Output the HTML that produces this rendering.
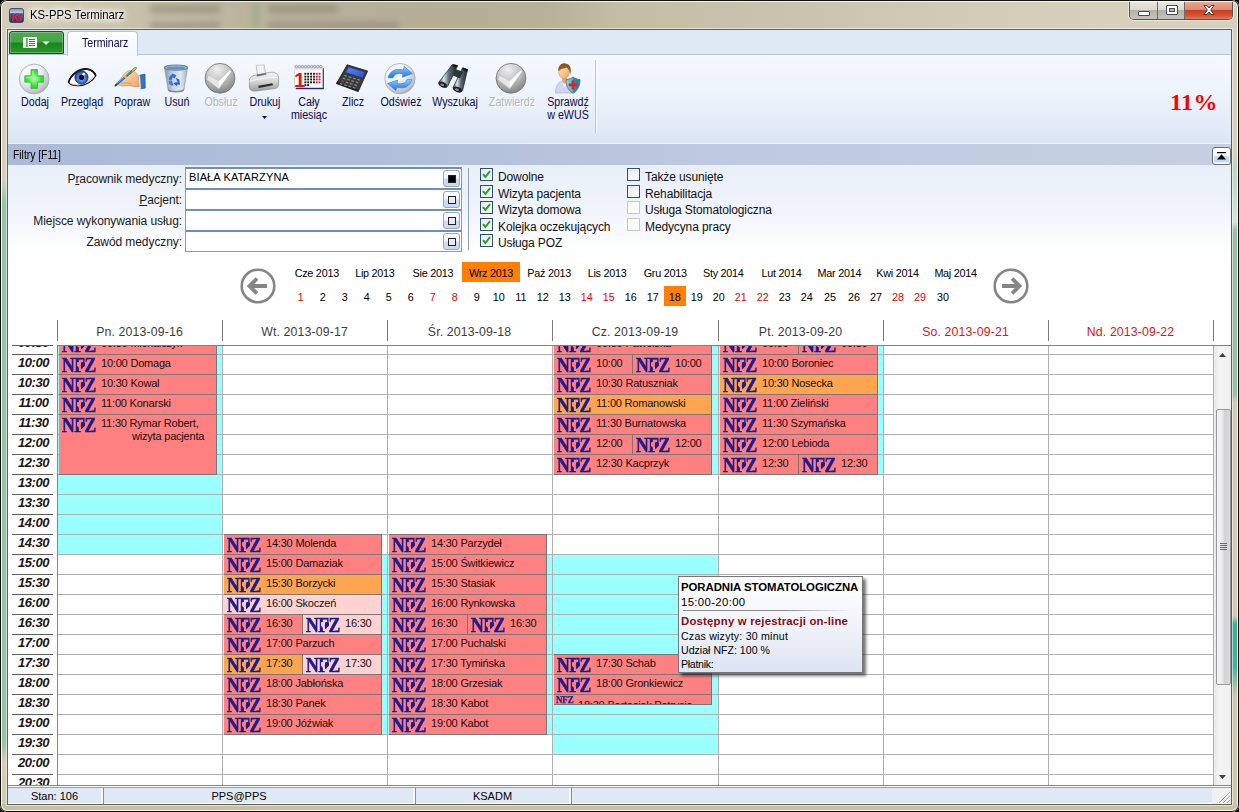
<!DOCTYPE html><html lang="pl"><head><meta charset="utf-8"><title>KS-PPS Terminarz</title><style>
*{box-sizing:border-box;margin:0;padding:0}
html,body{width:1239px;height:812px;overflow:hidden;background:#000}
body{font-family:"Liberation Sans",sans-serif;font-size:11px;color:#000;position:relative}
.a{position:absolute}
#frame{left:0;top:0;width:1239px;height:812px;border-radius:7px 7px 7px 7px;overflow:hidden;
 background:#d2cbb3}
#client{left:8px;top:30px;width:1223px;height:774px;background:#fff;overflow:hidden}
.t{position:absolute;white-space:nowrap;line-height:1}
.c{text-align:center}
.r{text-align:right}
.rl{position:absolute;color:#0a0a55;font-size:12px;line-height:13px;text-align:center;white-space:nowrap;transform:translateX(-50%) scaleX(.89)}
.rl.d{color:#b4b7be;text-shadow:1px 1px 0 #fff}
.fl{position:absolute;font-size:12px;letter-spacing:-.08px;line-height:14px;color:#1a1a1a;white-space:nowrap;text-align:right;right:1049px}
.inp{position:absolute;left:177px;width:277px;height:22px;border:1px solid #7f9dc3;border-top:2px solid #6f8fba;background:#fff}
.ib{position:absolute;left:435px;width:17px;height:17px;border:1px solid #9aa7ba;border-radius:3px;background:linear-gradient(#fbfcfe 0,#f1f5fb 45%,#cfdef5 55%,#c6d8f3 100%)}
.ib i{position:absolute;left:4px;top:4px;width:8px;height:8px;border:1px solid #222;background:#e8ecf4}
.ib.f i{background:#000}
.cb{position:absolute;width:13px;height:13px;border:1px solid #2f4f75;background:linear-gradient(135deg,#e6e9ee,#fff)}
.cb.d{border-color:#c9c9c4;background:#fbfbfa}
.cl{position:absolute;font-size:12px;letter-spacing:-.12px;line-height:14px;color:#111;white-space:nowrap}
.mo{position:absolute;top:232px;height:20px;width:58px;font-size:10.8px;letter-spacing:-.25px;line-height:22px;text-align:center;color:#000;white-space:nowrap}
.dy{position:absolute;top:256px;height:20px;width:22px;font-size:10.8px;line-height:22px;text-align:center;color:#000}
.red{color:#f00000}
.sel{background:#ff8000}
.hd{position:absolute;top:294px;height:16px;font-size:12.3px;letter-spacing:.14px;line-height:16px;text-align:center;color:#3c3c3c;white-space:nowrap}
.hd.we{color:#e81010}
.tick{position:absolute;top:290px;width:1px;height:21px;background:#7a7a7a}
.tm{position:absolute;left:4px;width:41px;padding-left:2px;height:20px;font:italic bold 13px/15px "Liberation Sans",sans-serif;letter-spacing:-.45px;color:#1c1410;text-align:center;border-top:1px solid #606060}
.hl{position:absolute;left:49px;width:1157px;height:1px;background:#b0b0b0}
.vl{position:absolute;top:315px;width:1px;height:440px;background:#b0b0b0}
.cy{position:absolute;background:#99ffff}
.ev{position:absolute;--bg:#ff8080;background:var(--bg);border:1px solid #7a7676;border-width:1px 1px 1px 0;overflow:hidden;white-space:nowrap;font-size:11px;letter-spacing:-.2px;line-height:13px;color:#111}
.ev.o{--bg:#ffa550}
.ev.p{--bg:#ffd2d2}
.nfz{position:absolute;left:2.5px;top:0;font:bold 20.6px/21px "Liberation Serif",serif;color:#1c1c8c;-webkit-text-stroke:.55px #1c1c8c;letter-spacing:-.6px;transform:scaleX(.86);transform-origin:0 0}
.et{position:absolute;left:42px;top:2px}
.h1,.h2{position:absolute;top:6.6px;width:4.2px;height:8px}
.h1{left:17.6px;background:var(--bg);clip-path:polygon(100% 18%,78% 4%,45% 0,14% 10%,0 32%,14% 56%,100% 100%)}
.h2{left:21.8px;width:4.6px;background:#1c1c8c;clip-path:polygon(0 18%,22% 4%,55% 0,86% 10%,100% 32%,86% 56%,0 100%)}
</style></head><body>
<div id="frame" class="a">
<div class="a" style="left:0;top:0;width:1239px;height:30px;background:linear-gradient(90deg,#d3cdb8 0,#cbc5ae 8%,#bbb49d 20%,#b5ae97 34%,#b8b19a 44%,#c3bda5 50%,#c9c3ad 62%,#d0cab5 75%,#d6d0bc 88%,#d5cfbb 100%)"></div>
<div class="a" style="left:150px;top:5px;width:70px;height:8px;background:#857e6a;filter:blur(3px);opacity:.55"></div>
<div class="a" style="left:150px;top:22px;width:70px;height:7px;background:#857e6a;filter:blur(3px);opacity:.55"></div>
<div class="a" style="left:268px;top:5px;width:70px;height:8px;background:#827c68;filter:blur(3px);opacity:.55"></div>
<div class="a" style="left:268px;top:22px;width:130px;height:7px;background:#827c68;filter:blur(3px);opacity:.55"></div>
<div class="a" style="left:252px;top:3px;width:8px;height:26px;background:#8fa57c;filter:blur(3px);opacity:.55"></div>
<div class="a" style="left:0;top:30px;width:8px;height:775px;background:linear-gradient(180deg,#d8d0bb 0,#d8d0bb 150px,#98c2a8 172px,#98c2a8 712px,#d4ccb4 732px,#d0c8ae 775px)"></div>
<div class="a" style="left:1231px;top:30px;width:8px;height:775px;background:linear-gradient(180deg,#d8d0bb 0,#d8d0bb 126px,#bcd6c2 136px,#d3e4d6 192px,#9bbfa6 200px,#9bbfa6 364px,#d2cab4 372px,#d2cab4 586px,#3fb098 594px,#45b29a 636px,#cdc5ad 664px,#d0c8ae 775px)"></div>
<div class="a" style="left:0;top:804px;width:1239px;height:8px;background:#c8c0a2"></div>
<div class="a" style="left:0;top:0;width:1239px;height:812px;border:1px solid #0e0e0a;border-radius:7px;box-shadow:inset 0 0 0 1px rgba(255,255,252,.85);z-index:5;pointer-events:none"></div>
<div class="a" style="left:7px;top:29px;width:1225px;height:776px;border:1px solid #625f53;box-shadow:0 0 0 1px rgba(255,255,255,.55)"></div>
<svg class="a" style="left:8.5px;top:7.5px" width="15" height="15" viewBox="0 0 16 16"><defs><linearGradient id="ki" x1="0" y1="0" x2="0" y2="1"><stop offset="0" stop-color="#7b93b8"/><stop offset=".35" stop-color="#c7d0df"/><stop offset=".36" stop-color="#3a5f96"/><stop offset="1" stop-color="#1d3f73"/></linearGradient></defs><rect x=".5" y=".5" width="15" height="15" rx="2.5" fill="url(#ki)" stroke="#2b4a7a"/><text x="2" y="13.5" font-family="Liberation Sans,sans-serif" font-weight="bold" font-style="italic" font-size="11" fill="#e01822">K</text><text x="8.3" y="14" font-family="Liberation Sans,sans-serif" font-weight="bold" font-style="italic" font-size="9" fill="#e01822">s</text></svg>
<div class="t" style="left:29.5px;top:9px;font-size:12.6px;transform:scaleX(.9);transform-origin:0 0;color:#000;text-shadow:0 0 6px #fff,0 0 6px #fff,0 0 9px #fff,0 0 12px #fff">KS-PPS Terminarz</div>
<div class="a" style="left:1129px;top:1px;width:104px;height:19px;border:1px solid #54524b;border-top:0;border-radius:0 0 5px 5px;overflow:hidden;box-shadow:0 0 0 1px rgba(255,255,255,.5)"><div class="a" style="left:0;top:0;width:28px;height:19px;background:linear-gradient(180deg,#e9e7e0 0,#dbd8cf 45%,#b3b0a5 50%,#c9c6bb 100%);border-right:1px solid #6d6a62"></div><div class="a" style="left:28px;top:0;width:27px;height:19px;background:linear-gradient(180deg,#e9e7e0 0,#dbd8cf 45%,#b3b0a5 50%,#c9c6bb 100%);border-right:1px solid #6d6a62"></div><div class="a" style="left:55px;top:0;width:48px;height:19px;background:linear-gradient(180deg,#eba999 0,#dc8a76 45%,#c93d22 50%,#d5593b 80%,#e08a6c 100%)"></div><div class="a" style="left:8px;top:10px;width:12px;height:5px;background:#fff;border:1px solid #45486a;border-radius:1px"></div><div class="a" style="left:36px;top:4px;width:12px;height:10px;background:#fff;border:1px solid #45486a;border-radius:1px"></div><div class="a" style="left:39px;top:7px;width:6px;height:4px;background:#b9b7ad;border:1px solid #45486a"></div><svg class="a" style="left:72px;top:3px" width="14" height="12" viewBox="0 0 14 12"><path d="M2 1.5 L5 1.5 L7 4 L9 1.5 L12 1.5 L8.7 6 L12 10.5 L9 10.5 L7 8 L5 10.5 L2 10.5 L5.3 6 Z" fill="#fff" stroke="#5a3030" stroke-width="1"/></svg></div>
<div id="client" class="a">
<div class="a" style="left:0;top:0;width:1224px;height:25px;background:#dfe9f5;border-bottom:1px solid #b4c6dd"></div>
<div class="a" style="left:1px;top:1px;width:55px;height:23px;border:1px solid #23500f;border-radius:3px 3px 0 0;background:linear-gradient(180deg,#50a850 0,#47a247 48%,#148814 52%,#2f962f 100%);box-shadow:inset 0 0 0 1px rgba(255,255,255,.25)"></div>
<svg class="a" style="left:15px;top:7px" width="30" height="12" viewBox="0 0 30 12"><rect x="0" y="0" width="14" height="11" rx="1" fill="#f4f7f4"/><rect x="3.3" y="1" width="1.2" height="9" fill="#2a8a2a"/><rect x="6" y="2" width="6" height="1" fill="#2a8a2a"/><rect x="6" y="4" width="6" height="1" fill="#2a8a2a"/><rect x="6" y="6" width="6" height="1" fill="#2a8a2a"/><rect x="6" y="8" width="6" height="1" fill="#2a8a2a"/><path d="M19.5 4.5 h7 l-3.5 3.5z" fill="#f4f7f4"/></svg>
<div class="a" style="left:59px;top:1px;width:71px;height:25px;border:1px solid #b4c6dd;border-bottom:0;border-radius:4px 4px 0 0;background:linear-gradient(180deg,#fbfdff,#f3f8fd)"></div>
<div class="t" style="left:74px;top:7px;font-size:12px;transform:scaleX(.88);transform-origin:0 0;color:#0a0a55">Terminarz</div>
<div class="a" style="left:0;top:25px;width:1224px;height:89px;background:linear-gradient(180deg,#f4f9fe 0,#eef4fb 40%,#e4ecf7 75%,#dbe5f3 100%)"></div>
<div class="a" style="left:59px;top:24px;width:71px;height:2px;background:#f3f8fd;border-left:1px solid #b4c6dd;border-right:1px solid #b4c6dd"></div>
<div class="a" style="left:587px;top:30px;width:1px;height:73px;background:#b9c7dc"></div>
<div class="a" style="left:588px;top:30px;width:1px;height:73px;background:#f8fbfe"></div>
<div class="t" style="left:1162px;top:60px;font:bold 24px/24px 'Liberation Serif',serif;letter-spacing:.4px;color:#ff0000">11%</div>
<svg width="0" height="0" style="position:absolute"><defs>
<radialGradient id="gs" cx=".35" cy=".28" r=".85"><stop offset="0" stop-color="#ffffff"/><stop offset=".45" stop-color="#eceef4"/><stop offset=".8" stop-color="#bfc2cc"/><stop offset="1" stop-color="#8d909c"/></radialGradient>
<radialGradient id="gg" cx=".4" cy=".2" r=".9"><stop offset="0" stop-color="#efefef"/><stop offset=".45" stop-color="#c4c4c4"/><stop offset=".85" stop-color="#8b8b8b"/><stop offset="1" stop-color="#6f6f6f"/></radialGradient>
<radialGradient id="gp" cx=".5" cy=".5" r=".6"><stop offset="0" stop-color="#b8ffb0"/><stop offset=".6" stop-color="#3fe23f"/><stop offset="1" stop-color="#25c425"/></radialGradient>
<radialGradient id="gi" cx=".5" cy=".55" r=".55"><stop offset="0" stop-color="#9ecbff"/><stop offset=".55" stop-color="#3f7fe0"/><stop offset="1" stop-color="#12308c"/></radialGradient>
<linearGradient id="gb" x1="0" y1="0" x2="1" y2="0"><stop offset="0" stop-color="#8496ac"/><stop offset=".35" stop-color="#c4d1e0"/><stop offset=".7" stop-color="#dfe8f0"/><stop offset="1" stop-color="#a3b3c6"/></linearGradient>
<linearGradient id="gpr" x1="0" y1="0" x2="0" y2="1"><stop offset="0" stop-color="#f6f6f6"/><stop offset=".5" stop-color="#d4d4d4"/><stop offset="1" stop-color="#9a9a9a"/></linearGradient>
<linearGradient id="gar" x1="0" y1="0" x2="0" y2="1"><stop offset="0" stop-color="#8fd0ff"/><stop offset="1" stop-color="#1f6fe0"/></linearGradient>
<linearGradient id="gbn" x1="0" y1="0" x2="1" y2="0"><stop offset="0" stop-color="#4e646c"/><stop offset=".28" stop-color="#d4e2e6"/><stop offset=".55" stop-color="#566a72"/><stop offset="1" stop-color="#1c262a"/></linearGradient>
<linearGradient id="gsh" x1="0" y1="0" x2="1" y2="0"><stop offset="0" stop-color="#8fe0dc"/><stop offset=".5" stop-color="#49b4b8"/><stop offset=".5" stop-color="#2c98a4"/><stop offset="1" stop-color="#1f7f8f"/></linearGradient>
<linearGradient id="gsc" x1="0" y1="0" x2="1" y2="1"><stop offset="0" stop-color="#5f84f0"/><stop offset="1" stop-color="#2f4fc4"/></linearGradient>
<linearGradient id="ghd" x1="0" y1="0" x2="1" y2="1"><stop offset="0" stop-color="#ffe2b8"/><stop offset="1" stop-color="#e8a868"/></linearGradient>
</defs></svg>
<svg class="a" style="left:10.1px;top:33.0px" width="32" height="32" viewBox="0 0 32 32"><circle cx="16.2" cy="16" r="14.9" fill="url(#gs)" stroke="#a3a5ad" stroke-width=".8"/><path d="M13 6.6h6.4v6.2h6.2v6.4h-6.2v6.2h-6.4v-6.2h-6.2v-6.4h6.2z" fill="url(#gp)" stroke="#27bd27" stroke-width=".8"/><path d="M13.8 7.4h2v6.2h-2z M7.6 13.6h6.2v1.8h-6.2z" fill="#9af59a" opacity=".7"/></svg>
<svg class="a" style="left:57.5px;top:33.0px" width="32" height="32" viewBox="0 0 32 32"><g transform="translate(1 1.2) scale(.94)"><path d="M1.6 19.4 C4 11,13 4.2,21.5 5.2 C26 5.8,29.3 8.8,30.6 12.2 C27.5 18,20 22.8,12.2 22.9 C7 23,3 21.4,1.6 19.4Z" fill="#fff" stroke="#1a1410" stroke-width="1.2"/><path d="M1.6 19.4 C4 11,13 4.2,21.5 5.2 C26 5.8,29.3 8.8,30.6 12.2" fill="none" stroke="#1a1410" stroke-width="1.9"/><path d="M3 20 C8 23.5,19 23,28 14" fill="none" stroke="#d9a890" stroke-width="1"/><circle cx="15.4" cy="14" r="7.1" fill="url(#gi)" stroke="#0f2a7a" stroke-width=".7"/><circle cx="15.4" cy="14" r="2.9" fill="#05050a"/><circle cx="17.8" cy="10.6" r="1.5" fill="#fff" opacity=".95"/></g></svg>
<svg class="a" style="left:106.4px;top:33.0px" width="32" height="32" viewBox="0 0 32 32"><path d="M25.6 12.2 L31 11.2 L31.2 25 L26.8 25.8Z" fill="#2f76c8" stroke="#1c4f94" stroke-width=".7"/><path d="M23.8 13 L25.8 12.2 L27 25.8 L25 25.4Z" fill="#eef0f6" stroke="#b8bcc8" stroke-width=".4"/><path d="M3.6 21 C6 16.5,9.5 10.5,13.5 8.2 C17.5 6.6,22 9.2,24.2 12.4 L25.2 23.4 C21 24.4,17.5 22.4,13.8 22.7 C9.5 23,6 23.4,3.6 21Z" fill="url(#ghd)" stroke="#c98a4c" stroke-width=".6"/><path d="M7 20.6 C10 19.5,14 19.6,17 20.8" fill="none" stroke="#d2955a" stroke-width=".8"/><path d="M2 22 L21.6 5.2" stroke="#1f63c8" stroke-width="2.3" stroke-linecap="round"/><path d="M2.6 21 L21.2 5" stroke="#6fb0f2" stroke-width=".8" stroke-linecap="round"/><path d="M10.6 14.8 L12.4 13.2" stroke="#e8c21a" stroke-width="2.8"/><path d="M14.6 11.2 L21.8 5" stroke="#3f8a9a" stroke-width="2" stroke-linecap="round"/><path d="M18.6 7.6 L22 4.8" stroke="#d8c428" stroke-width="1.6" stroke-linecap="round"/><path d="M1.2 22.8 L3 21.2" stroke="#1a3f88" stroke-width="1.4" stroke-linecap="round"/></svg>
<svg class="a" style="left:152.3px;top:33.0px" width="32" height="32" viewBox="0 0 32 32"><path d="M4.4 4.6 L8.2 27.2 C8.4 29.6,23.6 29.6,23.8 27.2 L27.6 4.6Z" fill="url(#gb)" stroke="#8c9cae" stroke-width=".7"/><path d="M8.3 25.5 C9 28.8,23 28.8,23.7 25.5 L23.8 27.2 C23.6 29.8,8.4 29.8,8.2 27.2Z" fill="#7e858f"/><ellipse cx="16" cy="4.6" rx="11.6" ry="2.6" fill="#9fc0dc" stroke="#6e7f90" stroke-width="1.1"/><ellipse cx="16" cy="4.9" rx="9.4" ry="1.5" fill="#5f93c2"/><path d="M9.5 13.5 L12.6 10.4 L16.4 12.2 L14.6 15.4 L12.8 14.2 L11.2 17.4 L8.8 16.4Z" fill="#2f6fe0"/><path d="M15.6 14.8 L19.2 16.6 L20 21.8 L17 21.4 L17.2 23.6 L13.4 20.4 L16.8 18.4 L16.4 19.6 L17.8 19.6Z" fill="#2a62d4"/><path d="M8.6 18 L11.8 17.6 L13.6 22.6 L11 22.4 L9.4 21Z" fill="#3c7ce8"/></svg>
<svg class="a" style="left:196.3px;top:33.0px" width="32" height="32" viewBox="0 0 32 32"><circle cx="16" cy="15.3" r="14.9" fill="url(#gg)" stroke="#777" stroke-width=".9"/><path d="M4.6 12.8 L14.4 18 L25.8 6.8 L27.3 8.8 L14.9 25.8 L3.3 16.4 Z" fill="#fdfdfd" stroke="#a2a2a2" stroke-width=".5"/><path d="M4.6 12.8 L14.4 18 L14.9 25.8 L3.3 16.4 Z" fill="#e6e6e6"/></svg>
<svg class="a" style="left:239.8px;top:33.0px" width="32" height="32" viewBox="0 0 32 32"><path d="M8.2 2.2 L16.2 2 L17.6 11 L9.4 12.4Z" fill="#e9e9e9" stroke="#a8a8a8" stroke-width=".6"/><path d="M10 2.6 L11 11.6 M12 2.5 L13 11.3 M14 2.4 L15 11" stroke="#fff" stroke-width=".9"/><path d="M1.4 17.6 C1.4 13.6,4.8 12.6,9 12 L21.6 9.4 C27 8.6,30.6 10.8,30.6 15 L30.6 21.6 C30.6 24,29 25.2,26.6 25.6 L8.2 28 C4 28.5,1.4 27.2,1.4 24Z" fill="url(#gpr)" stroke="#8c8c8c" stroke-width=".7"/><path d="M1.6 18.4 C6 16.6,22 13.6,30.4 14.6" fill="none" stroke="#fff" stroke-width="1" opacity=".8"/><path d="M10.2 22.8 L24.4 20.2 L25 22.2 L10.8 25Z" fill="#2c2c2c"/><path d="M8.6 11.6 L18 10 L18.4 11.6 L9 13.4Z" fill="#6e6e6e"/></svg>
<svg class="a" style="left:284.6px;top:33.0px" width="32" height="32" viewBox="0 0 32 32"><rect x="2.8" y="5.2" width="28" height="21" fill="#1c1c7c"/><rect x="1.6" y="3.8" width="28" height="21" fill="#fff" stroke="#c8c8d8" stroke-width=".5"/><rect x="1.6" y="3.8" width="28" height="3" fill="#e2e2ee"/><circle cx="3.40" cy="3.6" r="1.25" fill="none" stroke="#8a8aa0" stroke-width=".8"/><circle cx="6.45" cy="3.6" r="1.25" fill="none" stroke="#8a8aa0" stroke-width=".8"/><circle cx="9.50" cy="3.6" r="1.25" fill="none" stroke="#8a8aa0" stroke-width=".8"/><circle cx="12.55" cy="3.6" r="1.25" fill="none" stroke="#8a8aa0" stroke-width=".8"/><circle cx="15.60" cy="3.6" r="1.25" fill="none" stroke="#8a8aa0" stroke-width=".8"/><circle cx="18.65" cy="3.6" r="1.25" fill="none" stroke="#8a8aa0" stroke-width=".8"/><circle cx="21.70" cy="3.6" r="1.25" fill="none" stroke="#8a8aa0" stroke-width=".8"/><circle cx="24.75" cy="3.6" r="1.25" fill="none" stroke="#8a8aa0" stroke-width=".8"/><circle cx="27.80" cy="3.6" r="1.25" fill="none" stroke="#8a8aa0" stroke-width=".8"/><rect x="11.4" y="9.8" width="1.9" height="1.9" fill="#161616"/><rect x="14.2" y="9.8" width="1.9" height="1.9" fill="#161616"/><rect x="17.1" y="9.8" width="1.9" height="1.9" fill="#161616"/><rect x="20.0" y="9.8" width="1.9" height="1.9" fill="#161616"/><rect x="22.8" y="9.8" width="1.9" height="1.9" fill="#e01818"/><rect x="25.6" y="9.8" width="1.9" height="1.9" fill="#e01818"/><rect x="11.4" y="12.7" width="1.9" height="1.9" fill="#161616"/><rect x="14.2" y="12.7" width="1.9" height="1.9" fill="#161616"/><rect x="17.1" y="12.7" width="1.9" height="1.9" fill="#161616"/><rect x="20.0" y="12.7" width="1.9" height="1.9" fill="#161616"/><rect x="22.8" y="12.7" width="1.9" height="1.9" fill="#e01818"/><rect x="25.6" y="12.7" width="1.9" height="1.9" fill="#e01818"/><rect x="11.4" y="15.5" width="1.9" height="1.9" fill="#161616"/><rect x="14.2" y="15.5" width="1.9" height="1.9" fill="#161616"/><rect x="17.1" y="15.5" width="1.9" height="1.9" fill="#161616"/><rect x="20.0" y="15.5" width="1.9" height="1.9" fill="#161616"/><rect x="22.8" y="15.5" width="1.9" height="1.9" fill="#e01818"/><rect x="25.6" y="15.5" width="1.9" height="1.9" fill="#e01818"/><rect x="11.4" y="18.4" width="1.9" height="1.9" fill="#161616"/><rect x="14.2" y="18.4" width="1.9" height="1.9" fill="#161616"/><rect x="17.1" y="18.4" width="1.9" height="1.9" fill="#161616"/><rect x="20.0" y="18.4" width="1.9" height="1.9" fill="#161616"/><rect x="22.8" y="18.4" width="1.9" height="1.9" fill="#e01818"/><rect x="25.6" y="18.4" width="1.9" height="1.9" fill="#e01818"/><rect x="11.4" y="21.2" width="1.9" height="1.9" fill="#161616"/><rect x="14.2" y="21.2" width="1.9" height="1.9" fill="#161616"/><text x="1" y="23.6" style="font-family:'Liberation Sans',sans-serif;font-weight:bold;font-size:20.5px" fill="#f01010">1</text></svg>
<svg class="a" style="left:328.2px;top:33.0px" width="32" height="32" viewBox="0 0 32 32"><path d="M11.2 1.8 L31.6 8 L22.2 28.6 L.4 20.6Z" fill="#3a3a3c" stroke="#1e1e20" stroke-width=".8" stroke-linejoin="round"/><path d="M.4 20.6 L22.2 28.6 L22.6 27 L1 19.2Z" fill="#1a1a1c"/><path d="M12.4 3.8 L29.4 9 L26.6 15.2 L9.6 9.6Z" fill="url(#gsc)" stroke="#1c2c70" stroke-width=".6"/><path d="M8.6 11.8 l2.6 .85 l-.5 1.2 l-2.6 -.85z" fill="#22c832"/><path d="M12.9 13.1 l2.6 .85 l-.5 1.2 l-2.6 -.85z" fill="#8a8a8c"/><path d="M17.2 14.4 l2.6 .85 l-.5 1.2 l-2.6 -.85z" fill="#8a8a8c"/><path d="M21.5 15.7 l2.6 .85 l-.5 1.2 l-2.6 -.85z" fill="#8a8a8c"/><path d="M7.1 14.5 l2.6 .85 l-.5 1.2 l-2.6 -.85z" fill="#8a8a8c"/><path d="M11.4 15.8 l2.6 .85 l-.5 1.2 l-2.6 -.85z" fill="#8a8a8c"/><path d="M15.7 17.1 l2.6 .85 l-.5 1.2 l-2.6 -.85z" fill="#8a8a8c"/><path d="M20.0 18.4 l2.6 .85 l-.5 1.2 l-2.6 -.85z" fill="#8a8a8c"/><path d="M5.6 17.2 l2.6 .85 l-.5 1.2 l-2.6 -.85z" fill="#e42a1a"/><path d="M9.9 18.5 l2.6 .85 l-.5 1.2 l-2.6 -.85z" fill="#8a8a8c"/><path d="M14.2 19.8 l2.6 .85 l-.5 1.2 l-2.6 -.85z" fill="#8a8a8c"/><path d="M18.5 21.1 l2.6 .85 l-.5 1.2 l-2.6 -.85z" fill="#8a8a8c"/><path d="M4.1 19.9 l2.6 .85 l-.5 1.2 l-2.6 -.85z" fill="#8a8a8c"/><path d="M8.4 21.2 l2.6 .85 l-.5 1.2 l-2.6 -.85z" fill="#8a8a8c"/><path d="M12.7 22.5 l2.6 .85 l-.5 1.2 l-2.6 -.85z" fill="#8a8a8c"/><path d="M17.0 23.8 l2.6 .85 l-.5 1.2 l-2.6 -.85z" fill="#8a8a8c"/></svg>
<svg class="a" style="left:376.0px;top:33.0px" width="32" height="32" viewBox="0 0 32 32"><circle cx="16" cy="15.6" r="15.2" fill="url(#gs)" stroke="#a6a8b2" stroke-width=".8"/><path d="M4.2 14.8 C5.4 8,12.6 4.6,19.2 7.2 L20.2 3.6 L28.4 10.6 L18.4 14.2 L19 11 C14.4 9.4,10 11,9 14.8Z" fill="url(#gar)" stroke="#2a78dc" stroke-width=".6"/><path d="M27.8 16.4 C26.6 23.2,19.4 26.6,12.8 24 L11.8 27.6 L3.6 20.6 L13.6 17 L13 20.2 C17.6 21.8,22 20.2,23 16.4Z" fill="url(#gar)" stroke="#2a78dc" stroke-width=".6"/></svg>
<svg class="a" style="left:430.0px;top:33.0px" width="32" height="32" viewBox="0 0 32 32"><path d="M14.4 1.4 L19.6 2.6 L9.6 23.4 C8 26,1.2 24,.6 19.6Z" fill="url(#gbn)" stroke="#1c2428" stroke-width=".7"/><path d="M24.6 4.8 L29.6 6.6 L24.6 27.6 C23 30.6,15.6 28.8,15 24.6Z" fill="url(#gbn)" stroke="#1c2428" stroke-width=".7"/><path d="M17.6 6.4 L24.4 9 L21.6 15 L15.2 12.2Z" fill="#2c373c" stroke="#1c2428" stroke-width=".6"/><ellipse cx="4.8" cy="21.6" rx="4.4" ry="2.5" transform="rotate(24 4.8 21.6)" fill="#1b2226"/><ellipse cx="19.6" cy="26.4" rx="4.6" ry="2.5" transform="rotate(20 19.6 26.4)" fill="#1b2226"/><ellipse cx="4.2" cy="21.8" rx="2" ry="1.1" transform="rotate(24 4.2 21.8)" fill="#a878b8"/><ellipse cx="19" cy="26.6" rx="2.1" ry="1.1" transform="rotate(20 19 26.6)" fill="#a878b8"/><path d="M15.2 1.2 L19.8 2.4 L19 4.6 L14.4 3.4Z M25 4.6 L29.8 6.4 L29.2 8.6 L24.4 7Z" fill="#141a1d"/></svg>
<svg class="a" style="left:487.3px;top:33.0px" width="32" height="32" viewBox="0 0 32 32"><circle cx="16" cy="15.3" r="14.9" fill="url(#gg)" stroke="#777" stroke-width=".9"/><path d="M4.6 12.8 L14.4 18 L25.8 6.8 L27.3 8.8 L14.9 25.8 L3.3 16.4 Z" fill="#fdfdfd" stroke="#a2a2a2" stroke-width=".5"/><path d="M4.6 12.8 L14.4 18 L14.9 25.8 L3.3 16.4 Z" fill="#e6e6e6"/></svg>
<svg class="a" style="left:544.0px;top:33.0px" width="32" height="32" viewBox="0 0 32 32"><path d="M3.6 30 C3.4 23,6 19.4,10 18 L15.6 18.6 C20 19.6,22.8 23,23 30Z" fill="#d3d3f6" stroke="#a9a9dc" stroke-width=".6"/><path d="M9.6 18.2 L12.6 24.4 L15.8 18.4Z" fill="#f4f4ff"/><path d="M10.2 14 h4.6 v5 l-2.4 2 l-2.2 -2z" fill="#e6a872"/><ellipse cx="12" cy="9" rx="5.4" ry="6.6" fill="url(#ghd)" stroke="#cf8e54" stroke-width=".5"/><path d="M6.4 8.2 C5.8 2.6,9.6 -.2,13.4 .4 C18.2 1,19.6 5,18.4 11.4 C17.6 8,16.4 5.6,14.4 4.6 C11.6 5.6,8.4 5.8,6.4 8.2Z" fill="#8f5a1c"/><path d="M14 16.6 C16.6 16.4,19 15.6,21 14 C23 15.6,25.4 16.4,28 16.6 C28 23,25.6 27.6,21 30.2 C16.4 27.6,14 23,14 16.6Z" fill="url(#gsh)" stroke="#5f7a88" stroke-width="1"/><path d="M19.7 17.6 h2.6 v3 h3 v2.6 h-3 v3 h-2.6 v-3 h-3 v-2.6 h3z" fill="#f0182a"/></svg>
<div class="rl" style="left:27px;top:66px">Dodaj</div>
<div class="rl" style="left:74px;top:66px">Przegląd</div>
<div class="rl" style="left:124px;top:66px">Popraw</div>
<div class="rl" style="left:169px;top:66px">Usuń</div>
<div class="rl d" style="left:213px;top:66px">Obsłuż</div>
<div class="rl" style="left:257px;top:66px">Drukuj</div>
<div class="rl" style="left:301px;top:66px">Cały<br>miesiąc</div>
<div class="rl" style="left:345px;top:66px">Zlicz</div>
<div class="rl" style="left:393px;top:66px">Odśwież</div>
<div class="rl" style="left:447px;top:66px">Wyszukaj</div>
<div class="rl d" style="left:504px;top:66px">Zatwierdź</div>
<div class="rl" style="left:560px;top:66px">Sprawdź<br>w eWUŚ</div>
<svg class="a" style="left:254px;top:86px" width="5" height="3" viewBox="0 0 5 3"><path d="M0 0h5L2.5 3z" fill="#0a0a55"/></svg>
<div class="a" style="left:0;top:113px;width:1224px;height:22px;background:linear-gradient(90deg,#abbbd7 0,#b0bed9 30%,#bfcadf 60%,#c6d0e2 100%);border-top:1px solid #edf2fa"></div>
<div class="t" style="left:4.5px;top:119px;font-size:12px;transform:scaleX(.86);transform-origin:0 0;color:#000">Filtry [F11]</div>
<div class="a" style="left:1204px;top:117px;width:19px;height:18px;border:1px solid #707070;border-radius:3px;background:linear-gradient(180deg,#fff 0,#f4f6ff 45%,#c6dcff 55%,#bcd6ff 88%,#fff 92%);box-shadow:inset 0 0 0 1px #fff"></div>
<svg class="a" style="left:1209px;top:122px" width="9" height="8" viewBox="0 0 9 8"><rect x="0" y="0" width="9" height="1.2" fill="#000"/><path d="M0 7.4 L4.5 2.2 L9 7.4z" fill="#000"/></svg>
<div class="a" style="left:0;top:135px;width:1224px;height:92px;background:linear-gradient(180deg,#e9eff8 0,#eef3fa 40%,#ffffff 100%)"></div>
<div class="fl" style="top:142px">P<u>r</u>acownik medyczny:</div>
<div class="inp" style="top:137px"></div>
<div class="ib f" style="top:140px"><i></i></div>
<div class="fl" style="top:163px"><u>P</u>acjent:</div>
<div class="inp" style="top:158px"></div>
<div class="ib" style="top:161px"><i></i></div>
<div class="fl" style="top:184px">Miejsce wykonywania usług:</div>
<div class="inp" style="top:179px"></div>
<div class="ib" style="top:182px"><i></i></div>
<div class="fl" style="top:205px">Zawód medyczny:</div>
<div class="inp" style="top:200px"></div>
<div class="ib" style="top:203px"><i></i></div>
<div class="t" style="left:181px;top:142px;font-size:11px;letter-spacing:.13px;color:#000">BIAŁA KATARZYNA</div>
<div class="a" style="left:460px;top:138px;width:1px;height:82px;background:#8f9bb0"></div>
<div class="cb" style="left:472px;top:138.3px"><svg class="a" style="left:1px;top:1px" width="9" height="9" viewBox="0 0 9 9"><path d="M1 4.2 L3.4 7 L8 1.2" fill="none" stroke="#1da51d" stroke-width="2"/></svg></div><div class="cl" style="left:490px;top:140.0px">Dowolne</div>
<div class="cb" style="left:472px;top:154.8px"><svg class="a" style="left:1px;top:1px" width="9" height="9" viewBox="0 0 9 9"><path d="M1 4.2 L3.4 7 L8 1.2" fill="none" stroke="#1da51d" stroke-width="2"/></svg></div><div class="cl" style="left:490px;top:156.5px">Wizyta pacjenta</div>
<div class="cb" style="left:472px;top:171.3px"><svg class="a" style="left:1px;top:1px" width="9" height="9" viewBox="0 0 9 9"><path d="M1 4.2 L3.4 7 L8 1.2" fill="none" stroke="#1da51d" stroke-width="2"/></svg></div><div class="cl" style="left:490px;top:173.0px">Wizyta domowa</div>
<div class="cb" style="left:472px;top:187.8px"><svg class="a" style="left:1px;top:1px" width="9" height="9" viewBox="0 0 9 9"><path d="M1 4.2 L3.4 7 L8 1.2" fill="none" stroke="#1da51d" stroke-width="2"/></svg></div><div class="cl" style="left:490px;top:189.5px">Kolejka oczekujących</div>
<div class="cb" style="left:472px;top:204.3px"><svg class="a" style="left:1px;top:1px" width="9" height="9" viewBox="0 0 9 9"><path d="M1 4.2 L3.4 7 L8 1.2" fill="none" stroke="#1da51d" stroke-width="2"/></svg></div><div class="cl" style="left:490px;top:206.0px">Usługa POZ</div>
<div class="cb" style="left:619px;top:138.3px"></div><div class="cl" style="left:637px;top:140.0px">Także usunięte</div>
<div class="cb" style="left:619px;top:154.8px"></div><div class="cl" style="left:637px;top:156.5px">Rehabilitacja</div>
<div class="cb d" style="left:619px;top:171.3px"></div><div class="cl" style="left:637px;top:173.0px">Usługa Stomatologiczna</div>
<div class="cb d" style="left:619px;top:187.8px"></div><div class="cl" style="left:637px;top:189.5px">Medycyna pracy</div>
<div class="mo" style="left:279.8px">Cze 2013</div>
<div class="mo" style="left:337.9px">Lip 2013</div>
<div class="mo" style="left:395.9px">Sie 2013</div>
<div class="mo sel" style="left:454.0px">Wrz 2013</div>
<div class="mo" style="left:512.1px">Paź 2013</div>
<div class="mo" style="left:570.1px">Lis 2013</div>
<div class="mo" style="left:628.2px">Gru 2013</div>
<div class="mo" style="left:686.3px">Sty 2014</div>
<div class="mo" style="left:744.4px">Lut 2014</div>
<div class="mo" style="left:802.4px">Mar 2014</div>
<div class="mo" style="left:860.5px">Kwi 2014</div>
<div class="mo" style="left:918.6px">Maj 2014</div>
<div class="dy red" style="left:281.8px">1</div>
<div class="dy" style="left:303.8px">2</div>
<div class="dy" style="left:325.8px">3</div>
<div class="dy" style="left:347.8px">4</div>
<div class="dy" style="left:369.8px">5</div>
<div class="dy" style="left:391.8px">6</div>
<div class="dy red" style="left:413.8px">7</div>
<div class="dy red" style="left:435.8px">8</div>
<div class="dy" style="left:457.8px">9</div>
<div class="dy" style="left:479.8px">10</div>
<div class="dy" style="left:501.8px">11</div>
<div class="dy" style="left:523.8px">12</div>
<div class="dy" style="left:545.8px">13</div>
<div class="dy red" style="left:567.8px">14</div>
<div class="dy red" style="left:589.8px">15</div>
<div class="dy" style="left:611.8px">16</div>
<div class="dy" style="left:633.8px">17</div>
<div class="dy sel" style="left:655.8px">18</div>
<div class="dy" style="left:677.8px">19</div>
<div class="dy" style="left:699.8px">20</div>
<div class="dy red" style="left:721.8px">21</div>
<div class="dy red" style="left:743.8px">22</div>
<div class="dy" style="left:765.8px">23</div>
<div class="dy" style="left:787.8px">24</div>
<div class="dy" style="left:811.0px">25</div>
<div class="dy" style="left:834.9px">26</div>
<div class="dy" style="left:856.9px">27</div>
<div class="dy red" style="left:879.0px">28</div>
<div class="dy red" style="left:901.0px">29</div>
<div class="dy" style="left:924.1px">30</div>
<svg class="a" style="left:232px;top:238px" width="36" height="36" viewBox="0 0 36 36"><circle cx="18" cy="18" r="16.3" fill="none" stroke="#858585" stroke-width="2.6"/><path d="M27 18 H10 M17 10.5 L9.5 18 L17 25.5" fill="none" stroke="#858585" stroke-width="3.8"/></svg>
<svg class="a" style="left:985px;top:238px" width="36" height="36" viewBox="0 0 36 36"><circle cx="18" cy="18" r="16.3" fill="none" stroke="#858585" stroke-width="2.6"/><path d="M9 18 H26 M19 10.5 L26.5 18 L19 25.5" fill="none" stroke="#858585" stroke-width="3.8"/></svg>
<div class="hd" style="left:49px;width:165px">Pn. 2013-09-16</div>
<div class="hd" style="left:214px;width:165px">Wt. 2013-09-17</div>
<div class="hd" style="left:379px;width:165px">Śr. 2013-09-18</div>
<div class="hd" style="left:544px;width:166px">Cz. 2013-09-19</div>
<div class="hd" style="left:710px;width:165px">Pt. 2013-09-20</div>
<div class="hd we" style="left:875px;width:165px">So. 2013-09-21</div>
<div class="hd we" style="left:1040px;width:165px">Nd. 2013-09-22</div>
<div class="tick" style="left:49px"></div>
<div class="tick" style="left:214px"></div>
<div class="tick" style="left:379px"></div>
<div class="tick" style="left:544px"></div>
<div class="tick" style="left:710px"></div>
<div class="tick" style="left:875px"></div>
<div class="tick" style="left:1040px"></div>
<div class="tick" style="left:1205px"></div>
<div class="a" style="left:0;top:315px;width:1224px;height:440px;background:#fff;overflow:hidden">
<div class="cy" style="left:50px;top:0px;width:164px;height:209px"></div>
<div class="cy" style="left:215px;top:209px;width:164px;height:180px"></div>
<div class="cy" style="left:380px;top:209px;width:164px;height:180px"></div>
<div class="cy" style="left:545px;top:0px;width:165px;height:129px"></div>
<div class="cy" style="left:545px;top:209px;width:165px;height:200px"></div>
<div class="cy" style="left:711px;top:0px;width:164px;height:129px"></div>
<div class="hl" style="top:9px"></div>
<div class="hl" style="top:29px"></div>
<div class="hl" style="top:49px"></div>
<div class="hl" style="top:69px"></div>
<div class="hl" style="top:89px"></div>
<div class="hl" style="top:109px"></div>
<div class="hl" style="top:129px"></div>
<div class="hl" style="top:149px"></div>
<div class="hl" style="top:169px"></div>
<div class="hl" style="top:189px"></div>
<div class="hl" style="top:209px"></div>
<div class="hl" style="top:229px"></div>
<div class="hl" style="top:249px"></div>
<div class="hl" style="top:269px"></div>
<div class="hl" style="top:289px"></div>
<div class="hl" style="top:309px"></div>
<div class="hl" style="top:329px"></div>
<div class="hl" style="top:349px"></div>
<div class="hl" style="top:369px"></div>
<div class="hl" style="top:389px"></div>
<div class="hl" style="top:409px"></div>
<div class="hl" style="top:429px"></div>
<div class="hl" style="top:449px"></div>
<div class="vl" style="left:49px;top:0;background:#858585"></div>
<div class="vl" style="left:214px;top:0"></div>
<div class="vl" style="left:379px;top:0"></div>
<div class="vl" style="left:544px;top:0"></div>
<div class="vl" style="left:710px;top:0"></div>
<div class="vl" style="left:875px;top:0"></div>
<div class="vl" style="left:1040px;top:0"></div>
<div class="vl" style="left:1205px;top:0"></div>
<div class="tm" style="top:-11px">09:30</div>
<div class="tm" style="top:9px">10:00</div>
<div class="tm" style="top:29px">10:30</div>
<div class="tm" style="top:49px">11:00</div>
<div class="tm" style="top:69px">11:30</div>
<div class="tm" style="top:89px">12:00</div>
<div class="tm" style="top:109px">12:30</div>
<div class="tm" style="top:129px">13:00</div>
<div class="tm" style="top:149px">13:30</div>
<div class="tm" style="top:169px">14:00</div>
<div class="tm" style="top:189px">14:30</div>
<div class="tm" style="top:209px">15:00</div>
<div class="tm" style="top:229px">15:30</div>
<div class="tm" style="top:249px">16:00</div>
<div class="tm" style="top:269px">16:30</div>
<div class="tm" style="top:289px">17:00</div>
<div class="tm" style="top:309px">17:30</div>
<div class="tm" style="top:329px">18:00</div>
<div class="tm" style="top:349px">18:30</div>
<div class="tm" style="top:369px">19:00</div>
<div class="tm" style="top:389px">19:30</div>
<div class="tm" style="top:409px">20:00</div>
<div class="tm" style="top:429px">20:30</div>
<div class="ev" style="left:51px;top:-11px;width:158px;height:21px"><span class="nfz">NFZ</span><i class="h1"></i><i class="h2"></i><span class="et">09:30 Michalczyk</span></div>
<div class="ev" style="left:51px;top:9px;width:158px;height:21px"><span class="nfz">NFZ</span><i class="h1"></i><i class="h2"></i><span class="et">10:00 Domaga</span></div>
<div class="ev" style="left:51px;top:29px;width:158px;height:21px"><span class="nfz">NFZ</span><i class="h1"></i><i class="h2"></i><span class="et">10:30 Kowal</span></div>
<div class="ev" style="left:51px;top:49px;width:158px;height:21px"><span class="nfz">NFZ</span><i class="h1"></i><i class="h2"></i><span class="et">11:00 Konarski</span></div>
<div class="ev" style="left:51px;top:69px;width:158px;height:61px"><span class="nfz">NFZ</span><i class="h1"></i><i class="h2"></i><span class="et">11:30 Rymar Robert,</span><span class="et" style="left:73px;top:15px">wizyta pacjenta</span></div>
<div class="ev" style="left:216px;top:189px;width:158px;height:21px"><span class="nfz">NFZ</span><i class="h1"></i><i class="h2"></i><span class="et">14:30 Molenda</span></div>
<div class="ev" style="left:216px;top:209px;width:158px;height:21px"><span class="nfz">NFZ</span><i class="h1"></i><i class="h2"></i><span class="et">15:00 Damaziak</span></div>
<div class="ev o" style="left:216px;top:229px;width:158px;height:21px"><span class="nfz">NFZ</span><i class="h1"></i><i class="h2"></i><span class="et">15:30 Borzycki</span></div>
<div class="ev p" style="left:216px;top:249px;width:158px;height:21px"><span class="nfz">NFZ</span><i class="h1"></i><i class="h2"></i><span class="et">16:00 Skoczeń</span></div>
<div class="ev" style="left:216px;top:269px;width:79px;height:21px"><span class="nfz">NFZ</span><i class="h1"></i><i class="h2"></i><span class="et">16:30</span></div>
<div class="ev p" style="left:295px;top:269px;width:79px;height:21px"><span class="nfz">NFZ</span><i class="h1"></i><i class="h2"></i><span class="et">16:30</span></div>
<div class="ev" style="left:216px;top:289px;width:158px;height:21px"><span class="nfz">NFZ</span><i class="h1"></i><i class="h2"></i><span class="et">17:00 Parzuch</span></div>
<div class="ev o" style="left:216px;top:309px;width:79px;height:21px"><span class="nfz">NFZ</span><i class="h1"></i><i class="h2"></i><span class="et">17:30</span></div>
<div class="ev p" style="left:295px;top:309px;width:79px;height:21px"><span class="nfz">NFZ</span><i class="h1"></i><i class="h2"></i><span class="et">17:30</span></div>
<div class="ev" style="left:216px;top:329px;width:158px;height:21px"><span class="nfz">NFZ</span><i class="h1"></i><i class="h2"></i><span class="et">18:00 Jabłońska</span></div>
<div class="ev" style="left:216px;top:349px;width:158px;height:21px"><span class="nfz">NFZ</span><i class="h1"></i><i class="h2"></i><span class="et">18:30 Panek</span></div>
<div class="ev" style="left:216px;top:369px;width:158px;height:21px"><span class="nfz">NFZ</span><i class="h1"></i><i class="h2"></i><span class="et">19:00 Jóźwiak</span></div>
<div class="ev" style="left:381px;top:189px;width:158px;height:21px"><span class="nfz">NFZ</span><i class="h1"></i><i class="h2"></i><span class="et">14:30 Parzydeł</span></div>
<div class="ev" style="left:381px;top:209px;width:158px;height:21px"><span class="nfz">NFZ</span><i class="h1"></i><i class="h2"></i><span class="et">15:00 Świtkiewicz</span></div>
<div class="ev" style="left:381px;top:229px;width:158px;height:21px"><span class="nfz">NFZ</span><i class="h1"></i><i class="h2"></i><span class="et">15:30 Stasiak</span></div>
<div class="ev" style="left:381px;top:249px;width:158px;height:21px"><span class="nfz">NFZ</span><i class="h1"></i><i class="h2"></i><span class="et">16:00 Rynkowska</span></div>
<div class="ev" style="left:381px;top:269px;width:79px;height:21px"><span class="nfz">NFZ</span><i class="h1"></i><i class="h2"></i><span class="et">16:30</span></div>
<div class="ev" style="left:460px;top:269px;width:79px;height:21px"><span class="nfz">NFZ</span><i class="h1"></i><i class="h2"></i><span class="et">16:30</span></div>
<div class="ev" style="left:381px;top:289px;width:158px;height:21px"><span class="nfz">NFZ</span><i class="h1"></i><i class="h2"></i><span class="et">17:00 Puchalski</span></div>
<div class="ev" style="left:381px;top:309px;width:158px;height:21px"><span class="nfz">NFZ</span><i class="h1"></i><i class="h2"></i><span class="et">17:30 Tymińska</span></div>
<div class="ev" style="left:381px;top:329px;width:158px;height:21px"><span class="nfz">NFZ</span><i class="h1"></i><i class="h2"></i><span class="et">18:00 Grzesiak</span></div>
<div class="ev" style="left:381px;top:349px;width:158px;height:21px"><span class="nfz">NFZ</span><i class="h1"></i><i class="h2"></i><span class="et">18:30 Kabot</span></div>
<div class="ev" style="left:381px;top:369px;width:158px;height:21px"><span class="nfz">NFZ</span><i class="h1"></i><i class="h2"></i><span class="et">19:00 Kabot</span></div>
<div class="ev" style="left:546px;top:-11px;width:158px;height:21px"><span class="nfz">NFZ</span><i class="h1"></i><i class="h2"></i><span class="et">09:30 Pawelska</span></div>
<div class="ev" style="left:546px;top:9px;width:79px;height:21px"><span class="nfz">NFZ</span><i class="h1"></i><i class="h2"></i><span class="et">10:00</span></div>
<div class="ev" style="left:625px;top:9px;width:79px;height:21px"><span class="nfz">NFZ</span><i class="h1"></i><i class="h2"></i><span class="et">10:00</span></div>
<div class="ev" style="left:546px;top:29px;width:158px;height:21px"><span class="nfz">NFZ</span><i class="h1"></i><i class="h2"></i><span class="et">10:30 Ratuszniak</span></div>
<div class="ev o" style="left:546px;top:49px;width:158px;height:21px"><span class="nfz">NFZ</span><i class="h1"></i><i class="h2"></i><span class="et">11:00 Romanowski</span></div>
<div class="ev" style="left:546px;top:69px;width:158px;height:21px"><span class="nfz">NFZ</span><i class="h1"></i><i class="h2"></i><span class="et">11:30 Burnatowska</span></div>
<div class="ev" style="left:546px;top:89px;width:79px;height:21px"><span class="nfz">NFZ</span><i class="h1"></i><i class="h2"></i><span class="et">12:00</span></div>
<div class="ev" style="left:625px;top:89px;width:79px;height:21px"><span class="nfz">NFZ</span><i class="h1"></i><i class="h2"></i><span class="et">12:00</span></div>
<div class="ev" style="left:546px;top:109px;width:158px;height:21px"><span class="nfz">NFZ</span><i class="h1"></i><i class="h2"></i><span class="et">12:30 Kacprzyk</span></div>
<div class="ev" style="left:546px;top:309px;width:158px;height:21px"><span class="nfz">NFZ</span><i class="h1"></i><i class="h2"></i><span class="et">17:30 Schab</span></div>
<div class="ev" style="left:546px;top:329px;width:158px;height:21px"><span class="nfz">NFZ</span><i class="h1"></i><i class="h2"></i><span class="et">18:00 Gronkiewicz</span></div>
<div class="ev" style="left:546px;top:349px;width:158px;height:11px"><span class="nfz" style="font-size:9.8px;line-height:10px;top:-.5px;left:1.5px;-webkit-text-stroke:.25px #1c1c8c;letter-spacing:-.2px;transform:scaleX(.92)">NFZ</span><span class="et" style="left:24px;top:3.6px">18:30 Bartosiak Patrycja</span></div>
<div class="ev" style="left:712px;top:-11px;width:79px;height:21px"><span class="nfz">NFZ</span><i class="h1"></i><i class="h2"></i><span class="et">09:30</span></div>
<div class="ev" style="left:791px;top:-11px;width:79px;height:21px"><span class="nfz">NFZ</span><i class="h1"></i><i class="h2"></i><span class="et">09:30</span></div>
<div class="ev" style="left:712px;top:9px;width:158px;height:21px"><span class="nfz">NFZ</span><i class="h1"></i><i class="h2"></i><span class="et">10:00 Boroniec</span></div>
<div class="ev o" style="left:712px;top:29px;width:158px;height:21px"><span class="nfz">NFZ</span><i class="h1"></i><i class="h2"></i><span class="et">10:30 Nosecka</span></div>
<div class="ev" style="left:712px;top:49px;width:158px;height:21px"><span class="nfz">NFZ</span><i class="h1"></i><i class="h2"></i><span class="et">11:00 Zieliński</span></div>
<div class="ev" style="left:712px;top:69px;width:158px;height:21px"><span class="nfz">NFZ</span><i class="h1"></i><i class="h2"></i><span class="et">11:30 Szymańska</span></div>
<div class="ev" style="left:712px;top:89px;width:158px;height:21px"><span class="nfz">NFZ</span><i class="h1"></i><i class="h2"></i><span class="et">12:00 Lebioda</span></div>
<div class="ev" style="left:712px;top:109px;width:79px;height:21px"><span class="nfz">NFZ</span><i class="h1"></i><i class="h2"></i><span class="et">12:30</span></div>
<div class="ev" style="left:791px;top:109px;width:79px;height:21px"><span class="nfz">NFZ</span><i class="h1"></i><i class="h2"></i><span class="et">12:30</span></div>
<div class="a" style="left:49px;top:0;width:1175px;height:1px;background:#808080"></div>
<div class="a" style="left:4px;top:0;width:41px;height:1px;background:#606060"></div>
<div class="a" style="left:1206px;top:1px;width:18px;height:439px;background:linear-gradient(90deg,#e9e9e9,#f3f3f3 30%,#f0f0f0)"></div>
<svg class="a" style="left:1210.5px;top:8px" width="7" height="4" viewBox="0 0 7 4"><path d="M0 4 L3.5 0 L7 4z" fill="#404040"/></svg>
<svg class="a" style="left:1210.5px;top:430px" width="7" height="4" viewBox="0 0 7 4"><path d="M0 0 L3.5 4 L7 0z" fill="#404040"/></svg>
<div class="a" style="left:1208px;top:64px;width:15px;height:276px;border:1px solid #979797;border-radius:2px;background:linear-gradient(90deg,#f4f4f4 0,#e9e9e9 45%,#d2d2d4 55%,#dadadc 100%)"></div>
<div class="a" style="left:1212px;top:198px;width:7px;height:1px;background:#6a6a6a"></div>
<div class="a" style="left:1212px;top:200px;width:7px;height:1px;background:#6a6a6a"></div>
<div class="a" style="left:1212px;top:202px;width:7px;height:1px;background:#6a6a6a"></div>
<div class="a" style="left:1212px;top:204px;width:7px;height:1px;background:#6a6a6a"></div>
</div>
<div class="a" style="left:0;top:755px;width:1224px;height:19px;background:#dfe9f5;border-top:1px solid #868686"></div>
<div class="a" style="left:0;top:756px;width:1224px;height:1px;background:#fff"></div>
<div class="a" style="left:0;top:757px;width:1224px;height:1px;background:#a0a0a0"></div>
<div class="a" style="left:0;top:773px;width:1224px;height:1px;background:#fff"></div>
<div class="a" style="left:93px;top:758px;width:3px;height:16px;background:#f4f6f9;border-left:1px solid #fff;border-right:1px solid #8e8e8e"></div>
<div class="a" style="left:405px;top:758px;width:3px;height:16px;background:#f4f6f9;border-left:1px solid #fff;border-right:1px solid #8e8e8e"></div>
<div class="a" style="left:561px;top:758px;width:3px;height:16px;background:#f4f6f9;border-left:1px solid #fff;border-right:1px solid #8e8e8e"></div>
<div class="t c" style="left:0;top:761px;width:93px;font-size:11px">Stan: 106</div>
<div class="t c" style="left:96px;top:761px;width:270px;font-size:11px">PPS@PPS</div>
<div class="t c" style="left:408px;top:761px;width:153px;font-size:11px">KSADM</div>
<div class="a" style="left:1204px;top:758px;width:20px;height:16px;background:#f0f0f0"></div>
<svg class="a" style="left:1210px;top:761px" width="12" height="12" viewBox="0 0 12 12"><path d="M1 12 L12 1 M5 12 L12 5 M9 12 L12 9" stroke="#a4a4a4" stroke-width="1"/><path d="M2 12 L12 2 M6 12 L12 6 M10 12 L12 10" stroke="#fff" stroke-width="1"/></svg>
</div>
<div class="a" style="left:678px;top:576px;width:185px;height:97px;border:1px solid #767676;background:linear-gradient(180deg,#ffffff 0,#f4f6fb 40%,#dde4f3 100%);box-shadow:3px 3px 3px rgba(0,0,0,.55)"><div class="t" style="left:2px;top:5px;font-size:11.4px;letter-spacing:-.06px;font-weight:bold;color:#000">PORADNIA STOMATOLOGICZNA</div><div class="t" style="left:2px;top:20px;font-size:11.4px;letter-spacing:.34px;color:#000">15:00-20:00</div><div class="a" style="left:4px;top:33px;width:168px;height:1px;background:linear-gradient(90deg,#8a8a8a 0,#8a8a8a 60%,rgba(138,138,138,0))"></div><div class="t" style="left:2px;top:39px;font-size:11.4px;letter-spacing:.19px;font-weight:bold;color:#8b0a14">Dostępny w rejestracji on-line</div><div class="t" style="left:2px;top:54px;font-size:10.6px;letter-spacing:.22px;color:#000">Czas wizyty: 30 minut</div><div class="t" style="left:2px;top:68px;font-size:10.6px;color:#000">Udział NFZ: 100 %</div><div class="t" style="left:2px;top:82px;font-size:10.6px;letter-spacing:-.3px;color:#000">Płatnik:</div></div>
</div>
</body></html>
